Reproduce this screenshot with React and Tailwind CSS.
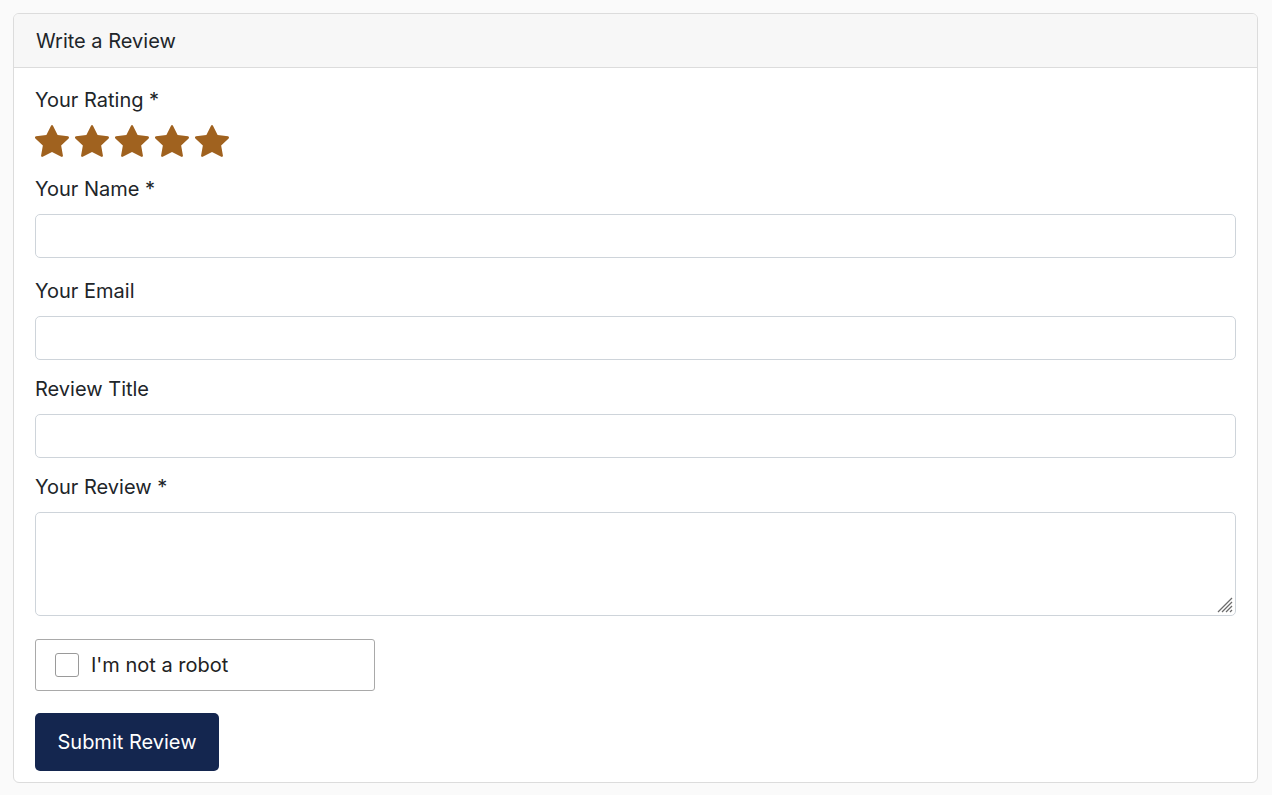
import { BsStarFill } from "react-icons/bs";

const font = { fontFamily: "Inter, 'Liberation Sans', sans-serif" };

function Label({ children, className }) {
  return (
    <label className={"block text-[20px] leading-[30px] text-[#212529] " + (className || "")}>
      {children}
    </label>
  );
}

function Field({ label, className }) {
  return (
    <div className={className}>
      <Label>{label}</Label>
      <input
        type="text"
        className="mt-[10px] block h-[44px] w-full rounded-[5px] border border-[#ced4da] bg-white px-3 text-[18px] outline-none"
      />
    </div>
  );
}

export default function App() {
  return (
    <div className="min-h-screen bg-[#fafafa] p-[13px] pr-[14px]" style={font}>
      <div className="h-[770px] overflow-hidden rounded-[6px] border border-[#dcdcdc] bg-white">
        <div className="flex h-[54px] items-center border-b border-[#dcdcdc] bg-[#f7f7f7] px-[22px]">
          <h2 className="text-[20px] text-[#212529]">Write a Review</h2>
        </div>

        <div className="px-[21px] pt-[17px]">
          <Label>Your Rating *</Label>
          <div className="mt-[9px] flex gap-[6px] text-[#a0621f]">
            {[0, 1, 2, 3, 4].map((i) => (
              <BsStarFill key={i} className="h-[34px] w-[34px]" />
            ))}
          </div>

          <Field label="Your Name *" className="mt-[16px]" />
          <Field label="Your Email" className="mt-[18px]" />
          <Field label="Review Title" className="mt-[14px]" />

          <div className="mt-[14px]">
            <Label>Your Review *</Label>
            <div className="relative mt-[10px]">
              <textarea className="block h-[104px] w-full resize-none rounded-[5px] border border-[#ced4da] bg-white px-3 text-[18px] outline-none" />
              <svg
                className="pointer-events-none absolute bottom-[3px] right-[3px] h-[16px] w-[16px]"
                viewBox="0 0 16 16"
                stroke="#6b6b6b"
                strokeWidth="1.2"
              >
                <line x1="15" y1="1" x2="1" y2="15" />
                <line x1="15" y1="5" x2="5" y2="15" />
                <line x1="15" y1="9" x2="9" y2="15" />
                <line x1="15" y1="13" x2="13" y2="15" />
              </svg>
            </div>
          </div>

          <div className="mt-[23px] flex h-[52px] w-[340px] items-center rounded-[3px] border-[1.5px] border-[#a9a9a9] pl-[19px]">
            <span className="h-[24px] w-[24px] rounded-[3px] border-[1.5px] border-[#9a9a9a] bg-white" />
            <span className="ml-[12px] text-[20px] text-[#222]">I'm not a robot</span>
          </div>

          <button
            type="button"
            className="mt-[22px] h-[58px] w-[184px] rounded-[5px] bg-[#14264f] text-[20px] text-white"
          >
            Submit Review
          </button>
        </div>
      </div>
    </div>
  );
}
